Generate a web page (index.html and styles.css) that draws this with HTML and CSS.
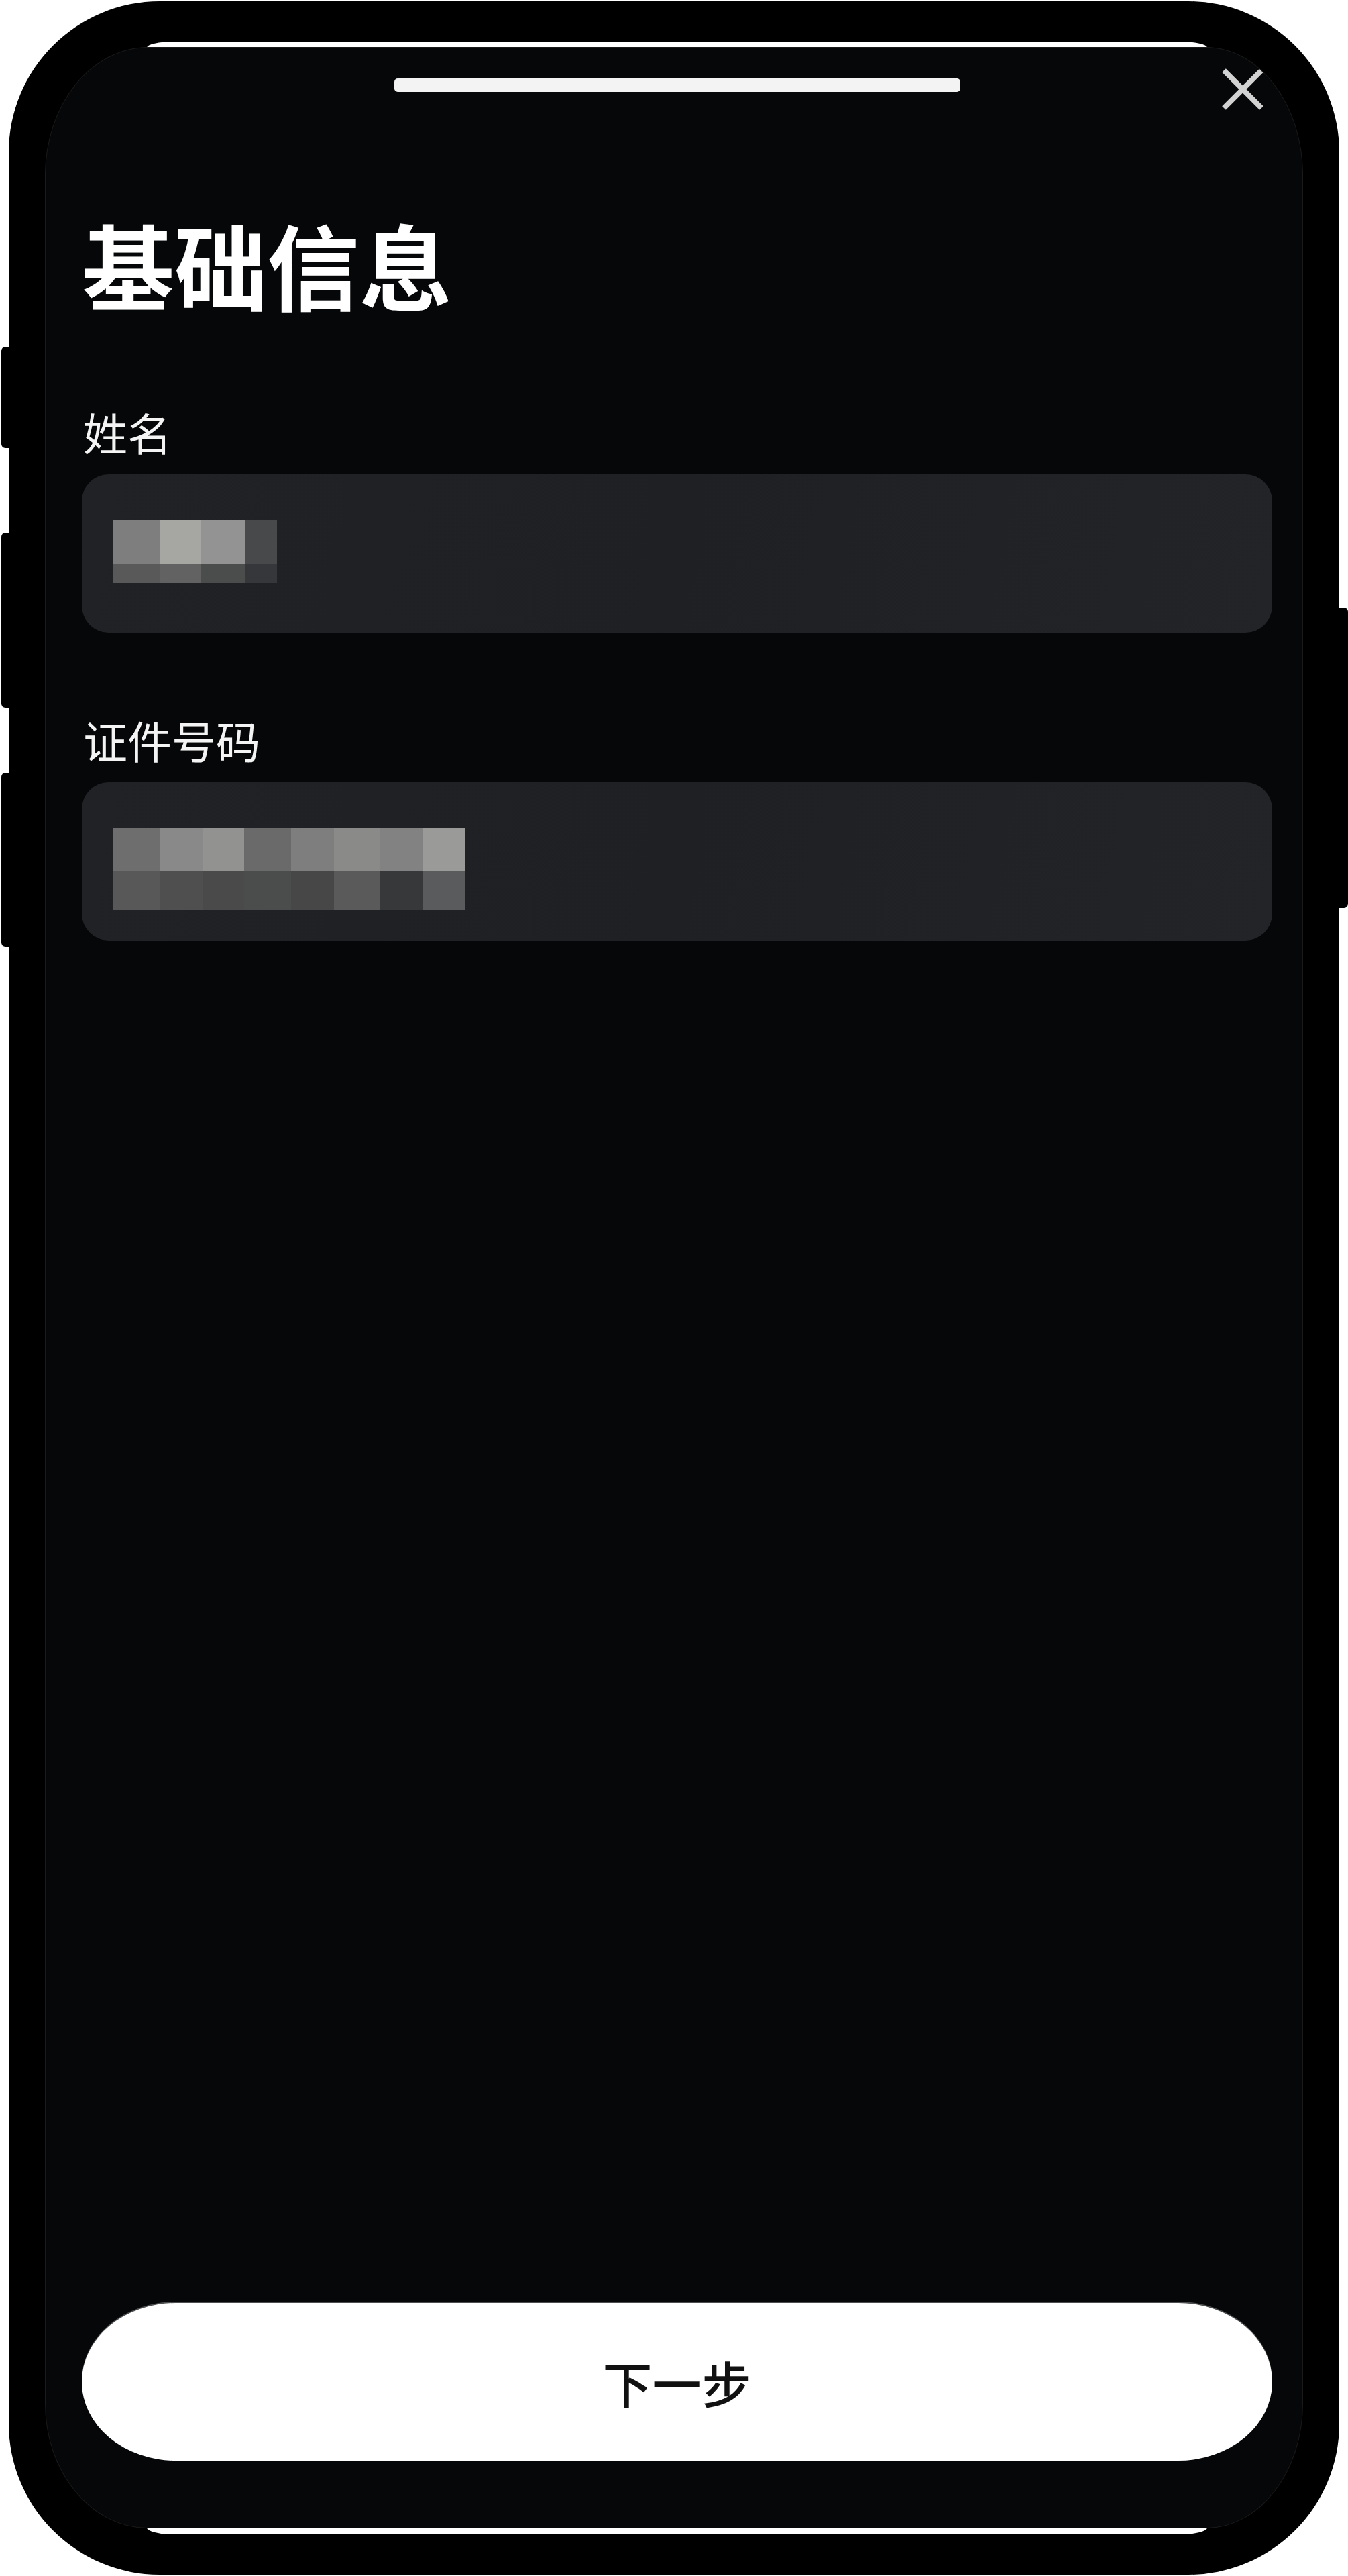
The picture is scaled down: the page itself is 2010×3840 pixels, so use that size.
FILE: index.html
```html
<!DOCTYPE html>
<html lang="zh-CN">
<head>
<meta charset="utf-8">
<title>基础信息</title>
<link rel="stylesheet" href="styles.css">
</head>
<body>
<div class="page">
  <div class="phone">
    <span class="side-btn left b1"></span>
    <span class="side-btn left b2"></span>
    <span class="side-btn left b3"></span>
    <span class="side-btn right b4"></span>
    <div class="strip top"></div>
    <div class="screen">
      <div class="topbar">
        <span class="handle"></span>
        <button class="close" aria-label="关闭">
          <svg viewBox="0 0 66 64" width="66" height="64">
            <path d="M5 4 L61 60 M61 4 L5 60" stroke="#d2d2d2" stroke-width="8" stroke-linecap="butt" fill="none"/>
          </svg>
        </button>
      </div>
      <div class="content">
        <h1 class="title">基础信息</h1>
        <div class="field">
          <label class="label">姓名</label>
          <div class="input">
            <div class="mosaic m1">
              <span class="c g7e"></span><span class="c ga6"></span><span class="c g93"></span><span class="c g48"></span>
              <span class="c g59"></span><span class="c g62"></span><span class="c g4b"></span><span class="c g35"></span>
            </div>
          </div>
        </div>
        <div class="field second">
          <label class="label">证件号码</label>
          <div class="input">
            <div class="mosaic m2">
              <span class="c g6e"></span><span class="c g89"></span><span class="c g92"></span><span class="c g6a"></span><span class="c g7e"></span><span class="c g8a"></span><span class="c g82"></span><span class="c g9a"></span>
              <span class="c g58"></span><span class="c g4f"></span><span class="c g4a"></span><span class="c g4b"></span><span class="c g47"></span><span class="c g5a"></span><span class="c g38"></span><span class="c g5b"></span>
            </div>
          </div>
        </div>
        <div class="spacer"></div>
        <button class="next">下一步</button>
      </div>
    </div>
    <div class="strip bottom"></div>
  </div>
</div>
</body>
</html>
```

FILE: styles.css
```css
* { box-sizing: border-box; }
html, body { margin: 0; padding: 0; background: #ffffff; }
body { font-family: "Noto Sans CJK SC", "Noto Sans", sans-serif; }

.page {
  width: 2010px;
  height: 3840px;
  padding: 2px 0 0 13px;
}

.phone {
  position: relative;
  width: 1984px;
  height: 3836px;
  background: #000000;
  border-radius: 225px;
  padding: 60px 55px;
  display: flex;
  flex-direction: column;
}

.side-btn {
  position: absolute;
  width: 14px;
  background: #000;
}
.side-btn.left { left: -11px; border-radius: 6px 0 0 6px; }
.side-btn.right { right: -13px; border-radius: 0 6px 6px 0; }
.b1 { top: 515px; height: 151px; }
.b2 { top: 792px; height: 261px; }
.b3 { top: 1150px; height: 259px; }
.b4 { top: 904px; height: 447px; }

.strip {
  background: #ffffff;
  margin: 0 142px 0 151px;
  flex: none;
}
.strip.top {
  height: 9px;
  border-radius: 40px 40px 0 0 / 9px 9px 0 0;
}
.strip.bottom {
  height: 10px;
  border-radius: 0 0 40px 40px / 0 0 10px 10px;
}

.screen {
  flex: 1;
  background: #050708;
  border-radius: 153px 144px 144px 153px / 190px 190px 185px 185px;
  display: flex;
  flex-direction: column;
  overflow: hidden;
  box-shadow: 0 0 0 1px #1a1a1a;
}

.topbar {
  display: grid;
  grid-template-columns: 1fr 844px 1fr;
  align-items: start;
  height: 66px;
  padding-top: 46px;
}
.handle {
  grid-column: 2;
  height: 20px;
  background: #f3f3f3;
  border-radius: 5px;
  transform: translateX(5px);
}
.close {
  grid-column: 3;
  justify-self: end;
  margin: -16px 56px 0 0;
  padding: 0;
  border: 0;
  background: transparent;
  width: 66px;
  height: 64px;
  display: block;
}
.close svg { display: block; }

.content {
  flex: 1;
  display: flex;
  flex-direction: column;
  padding: 0 45px 100px 54px;
}

.title {
  margin: 186px 0 0 0;
  font-size: 138px;
  line-height: 1;
  font-weight: 600;
  color: #ffffff;
  letter-spacing: 0;
}

.field { display: flex; flex-direction: column; margin-top: 149px; }
.field.second { margin-top: 126px; }

.label {
  font-size: 66px;
  line-height: 1;
  font-weight: 400;
  color: #f4f4f4;
  margin-left: 2px;
}

.input {
  margin-top: 31px;
  height: 236px;
  border-radius: 40px;
  background: linear-gradient(100deg, #202225 0%, #1e2023 50%, #222427 100%);
  display: flex;
  align-items: center;
  padding-left: 46px;
}

.mosaic { display: grid; }
.m1 {
  grid-template-columns: 71px 61px 66px 47px;
  grid-template-rows: 65px 29px;
  margin-top: -6px;
}
.m2 {
  grid-template-columns: 71px 63px 62px 70px 64px 68px 64px 64px;
  grid-template-rows: 63px 58px;
  margin-top: 22px;
}

.g7e { background: #7e7e7e; }
.ga6 { background: #a6a6a2; }
.g93 { background: #939393; }
.g48 { background: #48494b; }
.g59 { background: #595959; }
.g62 { background: #626262; }
.g4b { background: #4b4c4c; }
.g35 { background: #35373a; }
.g6e { background: #6e6e6e; }
.g89 { background: #89898a; }
.g92 { background: #929290; }
.g6a { background: #6a6a6a; }
.g8a { background: #8a8a88; }
.g82 { background: #828282; }
.g9a { background: #9a9a98; }
.g58 { background: #585858; }
.g4f { background: #4f4f4f; }
.g4a { background: #4a4a4a; }
.g47 { background: #474747; }
.g5a { background: #5a5a5a; }
.g38 { background: #37383a; }
.g5b { background: #5a5b5c; }

.spacer { flex: 1; }

.next {
  height: 235px;
  border: 0;
  border-radius: 140px / 117px;
  background: #ffffff;
  color: #111111;
  font-family: "Noto Sans CJK SC", "Noto Sans", sans-serif;
  font-size: 74px;
  font-weight: 500;
  line-height: 1;
  padding: 0;
  box-shadow: 0 -2px 0 rgba(150,150,150,0.5);
}
```
